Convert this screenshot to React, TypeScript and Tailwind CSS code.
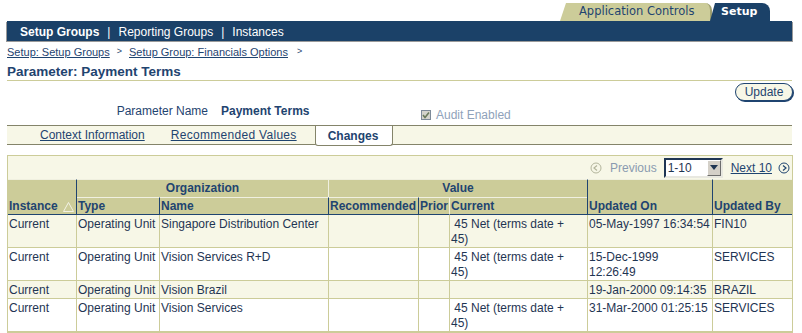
import React from 'react';

interface ChangeRow {
  instance: string;
  type: string;
  name: string;
  current: string[];
  updatedOn: string[];
  updatedBy: string;
}

// Rows shown on the Changes tab
const rows: ChangeRow[] = [
  { instance: 'Current', type: 'Operating Unit', name: 'Singapore Distribution Center', current: ['\u00a045 Net (terms date +', '45)'], updatedOn: ['05-May-1997 16:34:54'], updatedBy: 'FIN10' },
  { instance: 'Current', type: 'Operating Unit', name: 'Vision Services R+D', current: ['\u00a045 Net (terms date +', '45)'], updatedOn: ['15-Dec-1999', '12:26:49'], updatedBy: 'SERVICES' },
  { instance: 'Current', type: 'Operating Unit', name: 'Vision Brazil', current: [], updatedOn: ['19-Jan-2000 09:14:35'], updatedBy: 'BRAZIL' },
  { instance: 'Current', type: 'Operating Unit', name: 'Vision Services', current: ['\u00a045 Net (terms date +', '45)'], updatedOn: ['31-Mar-2000 01:25:15'], updatedBy: 'SERVICES' },
];

const PrevIcon = () => (
  <svg width="12" height="12" viewBox="0 0 12 12">
    <circle cx="6" cy="6" r="5" fill="none" stroke="#b3b59c" strokeWidth="1" />
    <path d="M7 3.5 L4 6 L7 8.5" fill="none" stroke="#b3b59c" strokeWidth="1.2" />
  </svg>
);

const NextIcon = () => (
  <svg width="12" height="12" viewBox="0 0 12 12">
    <circle cx="6" cy="6" r="5" fill="none" stroke="#1f4470" strokeWidth="1" />
    <path d="M5 3.5 L8 6 L5 8.5" fill="none" stroke="#1f4470" strokeWidth="1.2" />
  </svg>
);

const SortIcon = () => (
  <svg width="11" height="10" viewBox="0 0 11 10">
    <polygon points="5.5,0.5 10.5,9.5 0.5,9.5" fill="none" stroke="#f2f2e4" strokeWidth="1" />
  </svg>
);

const th = 'bg-[#cccc99] px-[1px] text-left font-bold leading-[15px] text-[#1f4470] border-t border-t-[#f0f0e0]';
const td = 'px-[1px] pt-[2px] pb-0 align-top leading-[15px] border-b border-[#cccc99]';

export default function App() {
  return (
    <div className="h-[333px] w-[802px] overflow-hidden bg-white font-['Liberation_Sans',Arial,sans-serif] text-[12px] text-[#1f3553]">
      {/* global tabs */}
      <div className="flex h-[21px] items-end justify-end pr-[32px]">
        <div className="flex h-[18px] w-[152px] items-center rounded-tr-[7px] border-r-2 border-[#a0a070] bg-[#cccc99] pl-[19px] font-['DejaVu_Sans',sans-serif] text-[11.5px] text-[#1f4470] [clip-path:polygon(6px_0,100%_0,100%_100%,0_100%)]">
          Application Controls
        </div>
        <div className="-ml-[2px] flex h-[18px] w-[60px] items-center rounded-tr-[8px] bg-[#1b4168] pl-[11px] font-['DejaVu_Sans',sans-serif] text-[11px] font-bold text-white [clip-path:polygon(5px_0,100%_0,100%_100%,0_100%)]">
          Setup
        </div>
      </div>

      {/* navy bar */}
      <div className="ml-[7px] mr-[10px] flex h-[20px] items-center bg-[#1b4168] pl-[13px] pt-[2px] text-white shadow-[1px_1px_0_#9a9a9a,-1px_1px_0_#9a9a9a]">
        <span className="font-bold">Setup Groups</span>
        <span className="mx-[8px]">|</span>
        <span>Reporting Groups</span>
        <span className="mx-[8px]">|</span>
        <span>Instances</span>
      </div>

      {/* breadcrumbs */}
      <div className="ml-[7px] mt-[4px] flex h-[14px] items-center text-[11px] text-[#1f4470]">
        <span className="underline">Setup: Setup Groups</span>
        <span className="mx-[7px] text-[9px]">&gt;</span>
        <span className="underline">Setup Group: Financials Options</span>
        <span className="ml-[9px] text-[9px]">&gt;</span>
      </div>

      {/* page title */}
      <div className="ml-[7px] mr-[10px] mt-[5px] h-[17px] border-b border-[#cccc99] text-[13.5px] font-bold leading-[16px] text-[#1f4470]">
        Parameter: Payment Terms
      </div>

      <div className="mr-[9px] mt-[2px] flex justify-end">
        <button className="flex h-[18px] w-[58px] items-center justify-center rounded-full border border-[#1f4470] bg-[#f7f7e7] text-[12px] leading-none text-[#1f4470] shadow-[1px_1px_0_#1f4470]">
          Update
        </button>
      </div>

      {/* parameter row */}
      <div className="ml-[7px] mt-[1px] flex h-[19px] items-start leading-[19px]">
        <div className="w-[201px] text-right text-[#1f4470]">Parameter Name</div>
        <div className="ml-[13px] w-[200px] font-bold text-[#1f4470]">Payment Terms</div>
        <div className="mt-[7px] flex h-[12px] items-center">
          <svg width="10" height="10" viewBox="0 0 10 10">
            <rect x="0.5" y="0.5" width="9" height="9" fill="#d4d4cc" stroke="#7d8a99" />
            <path d="M2 5 L4 7.5 L8 2.5" fill="none" stroke="#6a7a5c" strokeWidth="1.6" />
          </svg>
          <span className="ml-[5px] text-[#8fa2ba]">Audit Enabled</span>
        </div>
      </div>

      {/* sub tabs */}
      <div className="ml-[7px] mr-[10px] mt-[4px] flex h-[20px] items-stretch border-y border-[#84846a] bg-[#f7f7e7] text-[#1f4470]">
        <span className="ml-[33px] self-center underline">Context Information</span>
        <span className="ml-[26px] self-center tracking-[0.3px] underline">Recommended Values</span>
        <div className="-mb-[2px] ml-[18px] flex w-[78px] items-center rounded-b-[3px] border-x border-b border-[#84846a] bg-white pl-[12px] font-bold">
          Changes
        </div>
      </div>

      {/* results table */}
      <div className="ml-[7px] mt-[10px] w-[786px] border border-[#cccc99]">
        <div className="flex h-[23px] items-center justify-end bg-[#f7f7e7] pr-[2px]">
          <PrevIcon />
          <span className="ml-[8px] text-[#8a9bb0]">Previous</span>
          <div className="ml-[7px] flex h-[20px] w-[59px] items-center border-2 border-b-[#e8e8e0] border-l-[#1f3553] border-r-[#e8e8e0] border-t-[#1f3553] bg-white">
            <span className="ml-[2px] flex-1 text-[#1f3553]">1-10</span>
            <div className="flex h-[16px] w-[14px] items-center justify-center border border-b-[#6d6d6d] border-l-white border-r-[#6d6d6d] border-t-white bg-[#d4d0c8]">
              <svg width="8" height="5" viewBox="0 0 8 5">
                <polygon points="0,0 8,0 4,5" fill="#1f3553" />
              </svg>
            </div>
          </div>
          <span className="ml-[8px] text-[#1f4470] underline">Next 10</span>
          <span className="ml-[6px]"><NextIcon /></span>
        </div>

        <table className="w-full table-fixed border-separate border-spacing-0">
          <colgroup>
            <col className="w-[69px]" />
            <col className="w-[82px]" />
            <col className="w-[169px]" />
            <col className="w-[90px]" />
            <col className="w-[31px]" />
            <col className="w-[138px]" />
            <col className="w-[126px]" />
            <col className="w-[79px]" />
          </colgroup>
          <thead>
            <tr className="h-[18px]">
              <th rowSpan={2} className={th + ' border-b border-r border-b-[#1f4470] border-r-[#1f4470] align-bottom'}>
                <span className="flex items-center gap-[5px]">Instance <SortIcon /></span>
              </th>
              <th colSpan={2} className={th + ' !text-center align-middle'}>Organization</th>
              <th colSpan={3} className={th + ' border-l border-l-[#f0f0e0] !text-center align-middle'}>Value</th>
              <th rowSpan={2} className={th + ' border-x border-b border-x-[#1f4470] border-b-[#1f4470] align-bottom'}>Updated On</th>
              <th rowSpan={2} className={th + ' border-b border-b-[#1f4470] align-bottom'}>Updated By</th>
            </tr>
            <tr className="h-[18px]">
              <th className={th + ' border-b border-b-[#1f4470] align-middle'}>Type</th>
              <th className={th + ' border-b border-l border-b-[#1f4470] border-l-[#1f4470] align-middle'}>Name</th>
              <th className={th + ' border-b border-l border-b-[#1f4470] border-l-[#1f4470] align-middle'}>Recommended</th>
              <th className={th + ' border-b border-l border-b-[#1f4470] border-l-[#1f4470] align-middle'}>Prior</th>
              <th className={th + ' border-b border-l border-b-[#1f4470] border-l-[#f0f0e0] align-middle'}>Current</th>
            </tr>
          </thead>
          <tbody>
            {rows.map((r, i) => (
              <tr key={i} className={i % 2 === 0 ? 'bg-[#f7f7e7]' : 'bg-white'}>
                <td className={td + ' border-r'}>{r.instance}</td>
                <td className={td + ' whitespace-nowrap'}>{r.type}</td>
                <td className={td + ' border-l'}>{r.name}</td>
                <td className={td + ' border-l'}></td>
                <td className={td + ' border-l'}></td>
                <td className={td + ' border-l whitespace-nowrap'}>
                  {r.current.map((line, j) => (
                    <div key={j}>{line}</div>
                  ))}
                </td>
                <td className={td + ' border-x whitespace-nowrap'}>
                  {r.updatedOn.map((line, j) => (
                    <div key={j}>{line}</div>
                  ))}
                </td>
                <td className={td}>{r.updatedBy}</td>
              </tr>
            ))}
          </tbody>
        </table>
      </div>
    </div>
  );
}
